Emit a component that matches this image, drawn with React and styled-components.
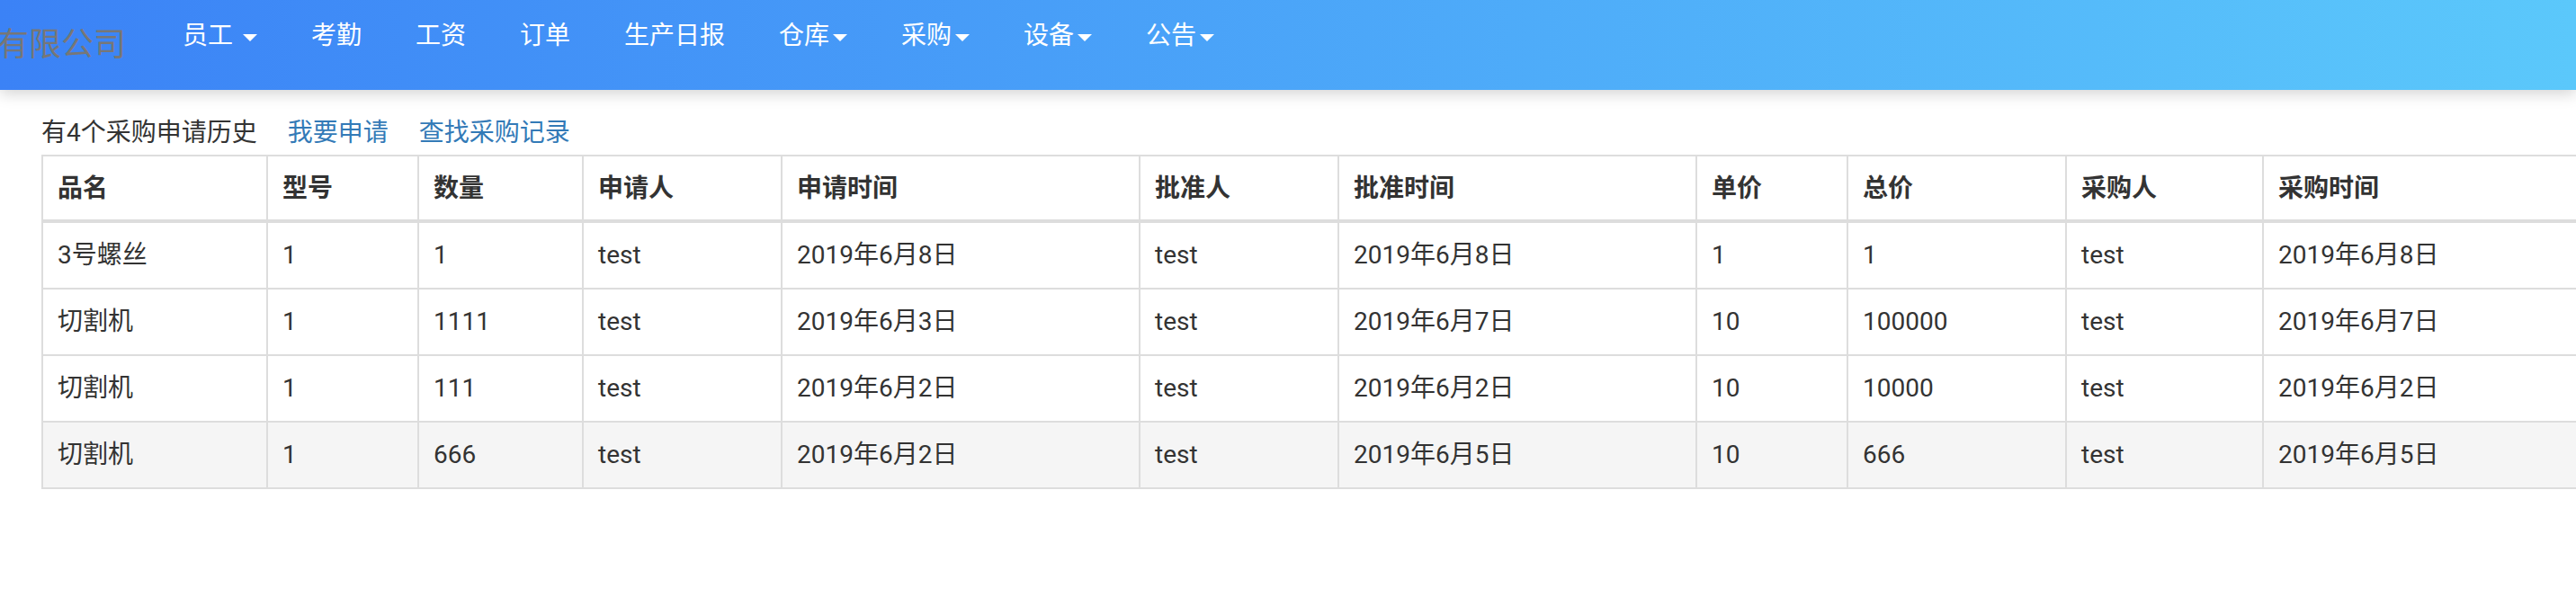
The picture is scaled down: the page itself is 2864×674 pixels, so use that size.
import React from 'react'
import styled, { createGlobalStyle } from 'styled-components';

const GlobalStyle = createGlobalStyle`
  html, body {
    margin: 0;
    padding: 0;
    background: #fff;
    overflow: hidden;
  }
  body {
    font-family: Roboto, "Noto Sans CJK SC", "Liberation Sans", sans-serif;
    font-size: 28px;
    line-height: 40px;
    color: #333;
  }
`;

const menu = [
    { label: '员工', caret: true, spaced: true },
    { label: '考勤' },
    { label: '工资' },
    { label: '订单' },
    { label: '生产日报' },
    { label: '仓库', caret: true },
    { label: '采购', caret: true },
    { label: '设备', caret: true },
    { label: '公告', caret: true },
]

const columns = [
    { title: '品名', width: 250 },
    { title: '型号', width: 168 },
    { title: '数量', width: 183 },
    { title: '申请人', width: 221 },
    { title: '申请时间', width: 398 },
    { title: '批准人', width: 221 },
    { title: '批准时间', width: 398 },
    { title: '单价', width: 168 },
    { title: '总价', width: 243 },
    { title: '采购人', width: 219 },
    { title: '采购时间', width: 420 },
]

const rows = [
    ['3号螺丝', '1', '1', 'test', '2019年6月8日', 'test', '2019年6月8日', '1', '1', 'test', '2019年6月8日'],
    ['切割机', '1', '1111', 'test', '2019年6月3日', 'test', '2019年6月7日', '10', '100000', 'test', '2019年6月7日'],
    ['切割机', '1', '111', 'test', '2019年6月2日', 'test', '2019年6月2日', '10', '10000', 'test', '2019年6月2日'],
    ['切割机', '1', '666', 'test', '2019年6月2日', 'test', '2019年6月5日', '10', '666', 'test', '2019年6月5日'],
]

const App = () => {
    return (
        <Page>
            <GlobalStyle />
            <Navbar>
                <Brand>有限公司</Brand>
                <Menu>
                    {menu.map(item => (
                        <MenuItem key={item.label}>
                            {item.label}
                            {item.spaced ? ' ' : ''}
                            {item.caret && <Caret />}
                        </MenuItem>
                    ))}
                </Menu>
            </Navbar>
            <Content>
                <Summary>
                    有4个采购申请历史
                    <Link href="#">我要申请</Link>
                    <Link href="#">查找采购记录</Link>
                </Summary>
                <Table>
                    <colgroup>
                        {columns.map(c => <col key={c.title} style={{ width: c.width }} />)}
                    </colgroup>
                    <thead>
                        <tr>
                            {columns.map(c => <Th key={c.title}>{c.title}</Th>)}
                        </tr>
                    </thead>
                    <tbody>
                        {rows.map((r, i) => (
                            <Row key={i} $hover={i === rows.length - 1}>
                                {r.map((cell, j) => <Td key={j}>{cell}</Td>)}
                            </Row>
                        ))}
                    </tbody>
                </Table>
            </Content>
        </Page>
    )
}

export default App;

const Page = styled.div`
    width: 100vw;
    height: 100vh;
    overflow: hidden;
    position: relative;
`;

const Navbar = styled.nav`
    display: flex;
    align-items: flex-start;
    height: 100px;
    background: linear-gradient(to right, #3b82f6, #5bc8fb);
    box-shadow: 0 4px 16px rgba(0, 0, 0, 0.18);
    position: relative;
    z-index: 1;
`;

const Brand = styled.a`
    margin-left: -4px;
    padding-right: 33px;
    font-size: 36px;
    line-height: 100px;
    color: #777;
    white-space: nowrap;
`;

const Menu = styled.ul`
    display: flex;
    margin: 0;
    padding: 0;
    list-style: none;
`;

const MenuItem = styled.li`
    padding: 20px 30px 0;
    font-size: 28px;
    line-height: 40px;
    color: #fff;
    white-space: pre;
    cursor: pointer;
`;

const Caret = styled.span`
    display: inline-block;
    width: 0;
    height: 0;
    margin-left: 4px;
    vertical-align: middle;
    border-top: 8px solid #fff;
    border-left: 8px solid transparent;
    border-right: 8px solid transparent;
`;

const Content = styled.div`
    padding: 28px 0 0 46px;
`;

const Summary = styled.div`
    font-size: 28px;
    line-height: 40px;
    color: #333;
    margin-bottom: 4px;
    white-space: nowrap;
`;

const Link = styled.a`
    margin-left: 34px;
    color: #337ab7;
    text-decoration: none;
`;

const Table = styled.table`
    border-collapse: collapse;
    table-layout: fixed;
    width: 2890px;
    border: 2px solid #ddd;
    background: #fff;
`;

const Th = styled.th`
    padding: 16px 16px 14px;
    border: 2px solid #ddd;
    border-bottom-width: 4px;
    text-align: left;
    font-weight: bold;
    line-height: 40px;
    white-space: nowrap;
`;

const Row = styled.tr`
    background: ${p => p.$hover ? '#f5f5f5' : '#fff'};
`;

const Td = styled.td`
    padding: 16px;
    border: 2px solid #ddd;
    line-height: 40px;
    white-space: nowrap;
`;
